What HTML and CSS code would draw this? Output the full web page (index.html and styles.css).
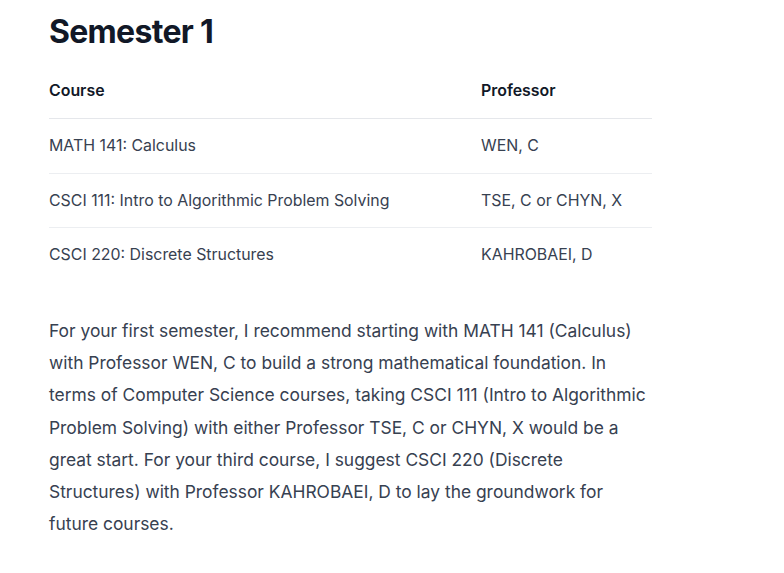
FILE: index.html
```html
<!DOCTYPE html>
<html>
<head>
<meta charset="utf-8">
<link rel="stylesheet" href="styles.css">
</head>
<body>
<main class="prose">
  <h2 class="title">Semester 1</h2>
  <table class="courses">
    <thead>
      <tr><th class="col-course">Course</th><th>Professor</th></tr>
    </thead>
    <tbody>
      <tr><td>MATH 141: Calculus</td><td>WEN, C</td></tr>
      <tr><td>CSCI 111: Intro to Algorithmic Problem Solving</td><td>TSE, C or CHYN, X</td></tr>
      <tr><td>CSCI 220: Discrete Structures</td><td>KAHROBAEI, D</td></tr>
    </tbody>
  </table>
  <p class="text">For your first semester, I recommend starting with MATH 141 (Calculus) with Professor WEN, C to build a strong mathematical foundation. In terms of Computer Science courses, taking CSCI 111 (Intro to Algorithmic Problem Solving) with either Professor TSE, C or CHYN, X would be a great start. For your third course, I suggest CSCI 220 (Discrete Structures) with Professor KAHROBAEI, D to lay the groundwork for future courses.</p>
</main>
</body>
</html>
```
FILE: styles.css
```css
html, body {
  margin: 0;
  padding: 0;
  background: #ffffff;
}
body {
  font-family: Inter, "Noto Sans", sans-serif;
  color: #374151;
}
.prose {
  width: 603px;
  padding: 10px 0 0 49px;
}
.title {
  margin: 0;
  font-size: 32px;
  line-height: 44px;
  font-weight: 700;
  color: #111827;
  letter-spacing: -0.7px;
}
.courses {
  margin-top: 25px;
  width: 603px;
  border-collapse: collapse;
  font-size: 15.9px;
}
.courses th {
  text-align: left;
  font-weight: 600;
  color: #111827;
  padding: 0 0 15px 0;
  line-height: 24px;
  border-bottom: 1px solid #e5e7eb;
}
.courses .col-course {
  width: 432px;
}
.courses td {
  padding: 15px 0 14.5px 0;
  line-height: 24px;
  border-bottom: 1px solid #eceef1;
  color: #374151;
}
.courses tbody tr:last-child td {
  border-bottom: none;
}
.text {
  margin: 33.5px 0 0 0;
  font-size: 17.4px;
  line-height: 32.2px;
  color: #374151;
}
```
